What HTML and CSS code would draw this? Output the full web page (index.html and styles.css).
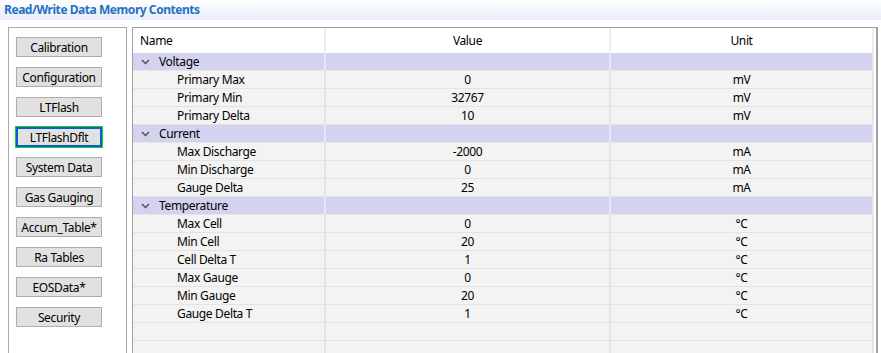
FILE: index.html
```html
<!DOCTYPE html>
<html>
<head>
<meta charset="utf-8">
<link rel="stylesheet" href="styles.css">
</head>
<body>
<div class="titlebar">Read/Write Data Memory Contents</div>
<div class="main">
  <div class="sidebar">
    <button class="btn">Calibration</button>
    <button class="btn">Configuration</button>
    <button class="btn">LTFlash</button>
    <button class="btn selected">LTFlashDflt</button>
    <button class="btn">System Data</button>
    <button class="btn">Gas Gauging</button>
    <button class="btn">Accum_Table*</button>
    <button class="btn">Ra Tables</button>
    <button class="btn">EOSData*</button>
    <button class="btn">Security</button>
  </div>
  <div class="table">
    <div class="row head"><div class="c name">Name</div><div class="c">Value</div><div class="c">Unit</div></div>

    <div class="row group"><div class="c name"><svg class="chev" width="9" height="6" viewBox="0 0 9 6"><path d="M1 1 L4.5 4.5 L8 1" fill="none" stroke="#4a4a5a" stroke-width="1.4"/></svg>Voltage</div><div class="c"></div><div class="c"></div></div>
    <div class="row"><div class="c name child">Primary Max</div><div class="c">0</div><div class="c">mV</div></div>
    <div class="row"><div class="c name child">Primary Min</div><div class="c">32767</div><div class="c">mV</div></div>
    <div class="row"><div class="c name child">Primary Delta</div><div class="c">10</div><div class="c">mV</div></div>

    <div class="row group"><div class="c name"><svg class="chev" width="9" height="6" viewBox="0 0 9 6"><path d="M1 1 L4.5 4.5 L8 1" fill="none" stroke="#4a4a5a" stroke-width="1.4"/></svg>Current</div><div class="c"></div><div class="c"></div></div>
    <div class="row"><div class="c name child">Max Discharge</div><div class="c">-2000</div><div class="c">mA</div></div>
    <div class="row"><div class="c name child">Min Discharge</div><div class="c">0</div><div class="c">mA</div></div>
    <div class="row"><div class="c name child">Gauge Delta</div><div class="c">25</div><div class="c">mA</div></div>

    <div class="row group"><div class="c name"><svg class="chev" width="9" height="6" viewBox="0 0 9 6"><path d="M1 1 L4.5 4.5 L8 1" fill="none" stroke="#4a4a5a" stroke-width="1.4"/></svg>Temperature</div><div class="c"></div><div class="c"></div></div>
    <div class="row"><div class="c name child">Max Cell</div><div class="c">0</div><div class="c">°C</div></div>
    <div class="row"><div class="c name child">Min Cell</div><div class="c">20</div><div class="c">°C</div></div>
    <div class="row"><div class="c name child">Cell Delta T</div><div class="c">1</div><div class="c">°C</div></div>
    <div class="row"><div class="c name child">Max Gauge</div><div class="c">0</div><div class="c">°C</div></div>
    <div class="row"><div class="c name child">Min Gauge</div><div class="c">20</div><div class="c">°C</div></div>
    <div class="row"><div class="c name child">Gauge Delta T</div><div class="c">1</div><div class="c">°C</div></div>
    <div class="row"><div class="c name child"></div><div class="c"></div><div class="c"></div></div>
    <div class="row"><div class="c name child"></div><div class="c"></div><div class="c"></div></div>
  </div>
</div>
</body>
</html>
```

FILE: styles.css
```css
html, body {
  margin: 0;
  padding: 0;
  background: #ffffff;
  overflow: hidden;
}
body {
  font-family: "Noto Sans", "Open Sans", sans-serif;
  font-size: 12px;
  letter-spacing: -0.35px;
  color: #000;
  width: 881px;
  height: 353px;
}
.titlebar {
  height: 20px;
  line-height: 19px;
  padding-left: 4px;
  font-weight: bold;
  color: #2770c6;
  background: linear-gradient(#ffffff, #e8eef7);
  letter-spacing: -0.45px;
}
.main {
  display: flex;
  gap: 5px;
  padding: 7px 0 0 8px;
  align-items: flex-start;
}
.sidebar {
  height: 340px;
  border: 1px solid #a9a9a9;
  display: flex;
  flex-direction: column;
  gap: 10px;
  padding: 9px 0 0 7px;
  box-sizing: border-box;
  width: 119px;
}
.btn {
  width: 86px;
  height: 20px;
  box-sizing: border-box;
  background: #e1e1e1;
  border: 1px solid #adadad;
  font-family: inherit;
  font-size: 12px;
  letter-spacing: -0.35px;
  color: #000;
  padding: 0;
  margin: 0;
  line-height: 17px;
}
.btn.selected {
  border: 2px solid #0a5fd0;
  outline: 1px solid #19d219;
  line-height: 15px;
}
.table {
  width: 746px;
  height: 340px;
  box-sizing: border-box;
  border: 1px solid #a0a0a0;
  border-right: 2px solid #a0a0a0;
  display: flex;
  flex-direction: column;
  background: #f3f3f3;
  padding-right: 2px;
  box-shadow: inset -3px 0 0 #ffffff;
}
.row {
  display: grid;
  grid-template-columns: 193px 285px 263px;
  height: 18px;
  box-sizing: border-box;
  border-bottom: 1px solid #e3e3e3;
  background: #f3f3f3;
  flex: none;
}
.row.head {
  height: 25px;
  border-bottom: none;
  background: #ffffff;
}
.row.group {
  background: #d3d3f0;
  border-bottom: 1px solid #e6e6e6;
}
.c {
  text-align: center;
  line-height: 17px;
  white-space: nowrap;
  overflow: hidden;
  border-right: 2px solid #e3e3e3;
  box-sizing: border-box;
}
.row.head .c {
  line-height: 25px;
  border-right: 2px solid #ececec;
}
.row.group .c {
  border-right: 2px solid #e6e6f4;
}
.c.name {
  text-align: left;
  padding-left: 7px;
  display: flex;
  align-items: center;
}
.c.name.child {
  padding-left: 44px;
}
.chev {
  margin: 1px 9px 0 1px;
}
```
